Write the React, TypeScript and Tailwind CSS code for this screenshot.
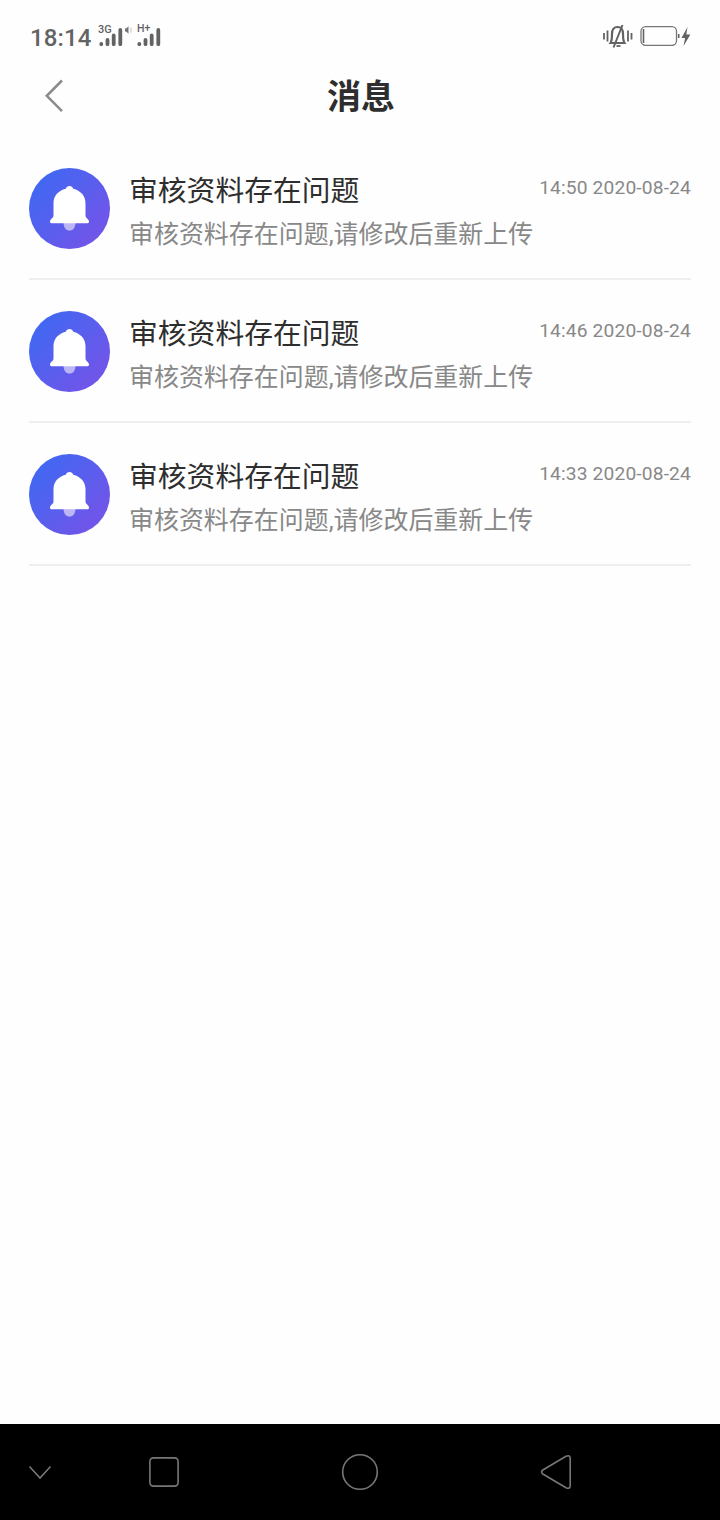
const messages = [
    { id: 1, title: "审核资料存在问题", body: "审核资料存在问题,请修改后重新上传", time: "14:50 2020-08-24" },
    { id: 2, title: "审核资料存在问题", body: "审核资料存在问题,请修改后重新上传", time: "14:46 2020-08-24" },
    { id: 3, title: "审核资料存在问题", body: "审核资料存在问题,请修改后重新上传", time: "14:33 2020-08-24" },
];

function SignalBars() {
    return (
        <svg width="24" height="19" viewBox="0 0 24 19" fill="none" stroke="#636363" strokeWidth="3.8" strokeLinecap="round">
            <path d="M2.300 16v.2M8.500 12v4.200M14.700 7.500v8.700M21.300 2v14.200" />
        </svg>
    );
}

function StatusBar() {
    return (
        <div className="flex h-[72px] items-start justify-between pl-[30px] pr-[28px] text-[#636363]">
            <div className="flex">
                <span className="mt-[22px] w-[69px] text-[24px] leading-8 font-medium tracking-[0.1px]">18:14</span>
                <div className="relative mt-7 w-[25px]">
                    <SignalBars />
                    <span className="absolute -top-[4px] -left-[1px] text-[11px] leading-3 font-medium">3G</span>
                </div>
                <svg className="mt-[25px] mr-[5px]" width="8" height="10" viewBox="0 0 8 10">
                    <path d="M1 3.500h1.200L4.500 1.200v7.600L2.200 6.500H1z" fill="#707070" />
                    <path d="M6.200 2.500c1.300 1.500 1.300 3.500 0 5" fill="none" stroke="#d8d8d8" strokeWidth="1.500" />
                </svg>
                <div className="relative mt-7 w-6">
                    <SignalBars />
                    <span className="absolute -top-[5px] left-0 text-[10.5px] leading-3 font-medium">
                        H<span className="relative -top-px">+</span>
                    </span>
                </div>
            </div>
            <div className="mt-6 flex">
                <svg width="30" height="26" viewBox="0 0 30 26" fill="none" stroke="#636363">
                    <path d="M1 9v6.500M4.500 6.500v11M25 6.500v11M28.500 9v6.500" strokeWidth="1.800" />
                    <path d="M7.500 19c1.300-2 1.500-4 1.500-9 0-4.500 2.200-7 5.500-7s5.500 2.500 5.500 7c0 5 .2 7 1.500 9z" strokeWidth="2.200" />
                    <path d="M19.500 1L10.500 23.500" strokeWidth="2" />
                    <path d="M13.500 22h4" strokeWidth="1.800" />
                </svg>
                <svg className="ml-[7px]" width="52" height="26" viewBox="0 0 52 26">
                    <rect x="1" y="2.700" width="35.500" height="18.600" rx="4.500" fill="none" stroke="#777" strokeWidth="1.300" />
                    <path d="M3.500 5v14" stroke="#636363" strokeWidth="1.600" />
                    <path d="M38.700 10v4" stroke="#636363" strokeWidth="1.600" />
                    <path d="M47.500 3L41.500 14h3.600L43.500 22l6.900-11.500h-4.100z" fill="#636363" />
                </svg>
            </div>
        </div>
    );
}

function BellIcon() {
    return (
        <svg className="shrink-0" width="81" height="81" viewBox="0 0 81 81">
            <defs>
                <linearGradient id="bell" x1="0.1" y1="0.15" x2="0.9" y2="0.85">
                    <stop offset="0" stopColor="#4068f2" />
                    <stop offset="1" stopColor="#7354e8" />
                </linearGradient>
            </defs>
            <circle cx="40.500" cy="40.500" r="40.500" fill="url(#bell)" />
            <path d="M34.500 55h12c-.3 5-2.500 7.500-6 7.500s-5.700-2.500-6-7.500z" fill="#bdb6f6" />
            <path
                d="M40.500 18c-1.800 0-3.200 1.100-3.700 2.700C29.500 22.300 24.500 28 24.500 35v12.500c0 2.500-3.500 3.700-3.500 6 0 1.200.5 1.700 1.500 1.700h36c1 0 1.500-.5 1.500-1.700 0-2.300-3.500-3.500-3.500-6V35c0-7-5-12.700-12.300-14.300C43.700 19.100 42.300 18 40.500 18z"
                fill="#fff"
            />
        </svg>
    );
}

function NavBar() {
    return (
        <div className="flex h-24 items-center bg-black">
            <svg className="ml-7" width="24" height="16" viewBox="0 0 24 16" fill="none" stroke="#777" strokeWidth="1.600">
                <path d="M1.500 2.500L12 14 22.500 2.500" />
            </svg>
            <svg className="ml-24" width="32" height="32" viewBox="0 0 32 32" fill="none" stroke="#777" strokeWidth="1.600">
                <rect x="1.900" y="1.900" width="28.200" height="28.200" rx="3.500" />
            </svg>
            <svg className="ml-[161px]" width="38" height="38" viewBox="0 0 38 38" fill="none" stroke="#777" strokeWidth="1.600">
                <circle cx="19" cy="19" r="17.300" />
            </svg>
            <svg className="ml-[161px]" width="32" height="36" viewBox="0 0 32 36" fill="none" stroke="#777" strokeWidth="1.600">
                <path d="M2.800 16L26 2.300Q30.200.5 30.200 4.500v27Q30.200 35.500 26 33.700L2.800 20Q.2 18 2.800 16z" />
            </svg>
        </div>
    );
}

export default function App() {
    return (
        <div className="flex h-[1520px] w-[720px] flex-col bg-[#fefefe] font-[Roboto,'Noto_Sans_CJK_SC',sans-serif]">
            <StatusBar />

            {/* Header */}
            <div className="grid h-[65px] grid-cols-[101px_1fr_99px]">
                <svg className="mt-[6px] ml-11" width="22" height="36" viewBox="0 0 22 36" fill="none" stroke="#8c8c8c" strokeWidth="2.600">
                    <path d="M18 2.500L2.800 17.800 18 33.200" />
                </svg>
                <h1 className="text-center text-[34px] leading-[50px] font-bold text-[#2e2e2e]">消息</h1>
            </div>

            {/* Message list */}
            <ul className="flex-1 px-[29px]">
                {messages.map((m) => (
                    <li key={m.id} className="flex h-[143px] border-b-2 border-[#efefef] pt-[31px]">
                        <BellIcon />
                        <div className="ml-[19px] flex-1 pt-px">
                            <div className="flex justify-between">
                                <h2 className="text-[28.8px] leading-[44px] text-[#2e2e2e]">{m.title}</h2>
                                <span className="text-[19.2px] leading-[38px] tracking-[0.15px] text-[#888]">{m.time}</span>
                            </div>
                            <p className="mt-px text-[24.96px] leading-[42px] text-[#888]">{m.body}</p>
                        </div>
                    </li>
                ))}
            </ul>

            <NavBar />
        </div>
    );
}
